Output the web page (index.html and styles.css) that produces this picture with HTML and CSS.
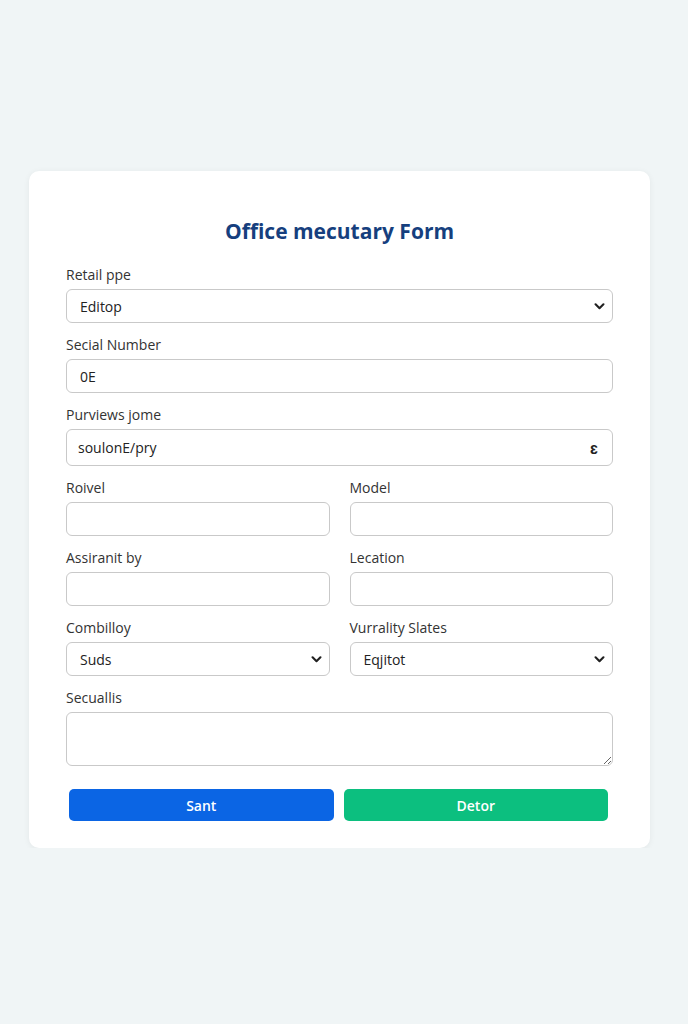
FILE: index.html
```html
<!DOCTYPE html>
<html lang="en">

<head>
    <meta charset="UTF-8">
    <title>Office mecutary Form</title>
    <link rel="stylesheet" href="styles.css">
</head>

<body>
    <div class="card">
        <h1 class="title">Office mecutary Form</h1>

        <form id="officeForm">
            <div class="group">
                <label for="retail">Retail ppe</label>
                <select id="retail" class="field">
                    <option>Editop</option>
                </select>
            </div>

            <div class="group">
                <label for="serial">Secial Number</label>
                <input type="text" id="serial" class="field" value="0E">
            </div>

            <div class="group">
                <label for="purviews">Purviews jome</label>
                <div class="field tall with-icon">
                    <span>soulonE/pry</span>
                    <span class="icon">&#603;</span>
                </div>
            </div>

            <div class="row">
                <div class="group">
                    <label for="roivel">Roivel</label>
                    <input type="text" id="roivel" class="field">
                </div>
                <div class="group">
                    <label for="model">Model</label>
                    <input type="text" id="model" class="field">
                </div>
            </div>

            <div class="row">
                <div class="group">
                    <label for="assigned">Assiranit by</label>
                    <input type="text" id="assigned" class="field">
                </div>
                <div class="group">
                    <label for="location">Lecation</label>
                    <input type="text" id="location" class="field">
                </div>
            </div>

            <div class="row">
                <div class="group">
                    <label for="combility">Combilloy</label>
                    <select id="combility" class="field">
                        <option>Suds</option>
                    </select>
                </div>
                <div class="group">
                    <label for="status">Vurrality Slates</label>
                    <select id="status" class="field">
                        <option>Eqjitot</option>
                    </select>
                </div>
            </div>

            <div class="group">
                <label for="notes">Secuallis</label>
                <textarea id="notes" class="field area"></textarea>
            </div>

            <div class="buttons">
                <button type="submit" class="btn blue">Sant</button>
                <button type="button" class="btn green">Detor</button>
            </div>
        </form>
    </div>
</body>

</html>
```

FILE: styles.css
```css
body {
    margin: 0;
    background-color: #f0f5f6;
    font-family: "Open Sans", Arial, sans-serif;
    color: #333;
}

.card {
    width: 547px;
    margin: 171px 0 0 29px;
    padding: 46px 37px 27px;
    background-color: #fff;
    border-radius: 10px;
    box-shadow: 0 1px 6px rgba(0, 0, 0, 0.06);
}

.title {
    margin: 0 0 21px;
    font-size: 21px;
    line-height: 28px;
    text-align: center;
    color: #163f7e;
    font-weight: 700;
}

.group {
    display: flex;
    flex-direction: column;
    margin-bottom: 13px;
}

label {
    font-size: 14px;
    line-height: 18px;
    margin-bottom: 5px;
    color: #333;
}

.field {
    box-sizing: border-box;
    width: 100%;
    height: 34px;
    padding: 0 13px;
    border: 1px solid #c9c9c9;
    border-radius: 6px;
    background-color: #fff;
    font-family: "Open Sans", Arial, sans-serif;
    font-size: 14px;
    color: #222;
}

select.field {
    appearance: none;
    -webkit-appearance: none;
    background-image: url("data:image/svg+xml,%3Csvg xmlns='http://www.w3.org/2000/svg' width='12' height='8' viewBox='0 0 12 8'%3E%3Cpath d='M1.5 1.5 6 6l4.5-4.5' fill='none' stroke='%23222' stroke-width='2.4' stroke-linecap='round' stroke-linejoin='round'/%3E%3C/svg%3E");
    background-repeat: no-repeat;
    background-position: right 7px center;
    background-size: 11px 7px;
}

.tall {
    height: 37px;
}

.with-icon {
    display: flex;
    align-items: center;
    justify-content: space-between;
    padding: 0 14px 0 11px;
}

.with-icon .icon {
    font-size: 16px;
    font-weight: 700;
}

.area {
    height: 54px;
    padding: 8px 13px;
    resize: vertical;
}

.row {
    display: grid;
    grid-template-columns: 1fr 1fr;
    column-gap: 20px;
}

.buttons {
    display: flex;
    gap: 10px;
    margin: 23px 5px 0 3px;
}

.btn {
    flex: 1;
    height: 32px;
    border: none;
    border-radius: 5px;
    color: #fff;
    font-family: "Open Sans", Arial, sans-serif;
    font-size: 14px;
    font-weight: 600;
    cursor: pointer;
}

.blue {
    background-color: #0b65e4;
}

.green {
    background-color: #0cbf7f;
}
```
